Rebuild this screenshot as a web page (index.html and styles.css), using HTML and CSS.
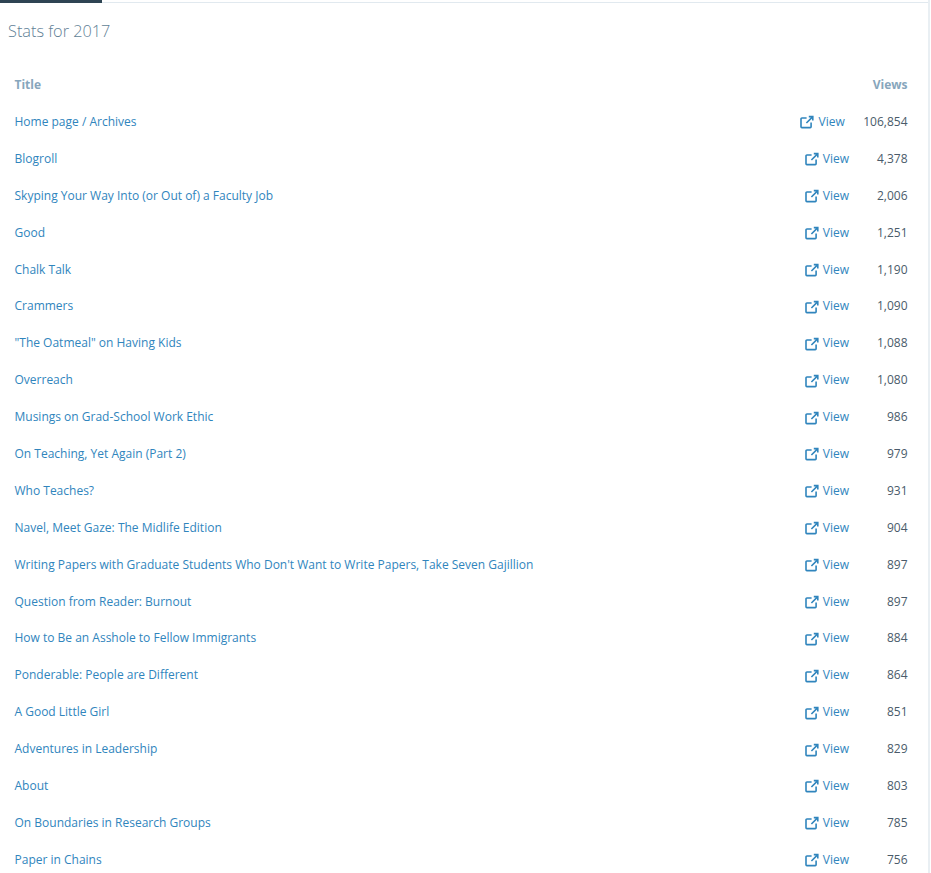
FILE: index.html
```html
<!DOCTYPE html>
<html lang="en">
<head>
<meta charset="utf-8">
<title>Stats for 2017</title>
<link rel="stylesheet" href="styles.css">
</head>
<body>
<svg class="defs" width="0" height="0" aria-hidden="true"><symbol id="ext" viewBox="0 0 14 14"><path d="M6.6 3H1.9a.9.9 0 0 0-.9.9v7.8c0 .5.4.9.9.9h8.3c.5 0 .9-.4.9-.9V7.6M8.8 1.6h4v4M12.8 1.6 6.4 8" fill="none" stroke="currentColor" stroke-width="1.6"/></symbol></svg>
<main class="panel">
<div class="tabbar"><span class="tab-active"></span></div>
<h2 class="heading">Stats for 2017</h2>
<div class="head-row"><span>Title</span><span>Views</span></div>
<ul class="rows">
<li class="row"><a class="title">Home page / Archives</a><a class="view"><svg class="icon"><use href="#ext"/></svg>View</a><span class="count">106,854</span></li>
<li class="row"><a class="title">Blogroll</a><a class="view"><svg class="icon"><use href="#ext"/></svg>View</a><span class="count">4,378</span></li>
<li class="row"><a class="title">Skyping Your Way Into (or Out of) a Faculty Job</a><a class="view"><svg class="icon"><use href="#ext"/></svg>View</a><span class="count">2,006</span></li>
<li class="row"><a class="title">Good</a><a class="view"><svg class="icon"><use href="#ext"/></svg>View</a><span class="count">1,251</span></li>
<li class="row"><a class="title">Chalk Talk</a><a class="view"><svg class="icon"><use href="#ext"/></svg>View</a><span class="count">1,190</span></li>
<li class="row"><a class="title">Crammers</a><a class="view"><svg class="icon"><use href="#ext"/></svg>View</a><span class="count">1,090</span></li>
<li class="row"><a class="title">"The Oatmeal" on Having Kids</a><a class="view"><svg class="icon"><use href="#ext"/></svg>View</a><span class="count">1,088</span></li>
<li class="row"><a class="title">Overreach</a><a class="view"><svg class="icon"><use href="#ext"/></svg>View</a><span class="count">1,080</span></li>
<li class="row"><a class="title">Musings on Grad-School Work Ethic</a><a class="view"><svg class="icon"><use href="#ext"/></svg>View</a><span class="count">986</span></li>
<li class="row"><a class="title">On Teaching, Yet Again (Part 2)</a><a class="view"><svg class="icon"><use href="#ext"/></svg>View</a><span class="count">979</span></li>
<li class="row"><a class="title">Who Teaches?</a><a class="view"><svg class="icon"><use href="#ext"/></svg>View</a><span class="count">931</span></li>
<li class="row"><a class="title">Navel, Meet Gaze: The Midlife Edition</a><a class="view"><svg class="icon"><use href="#ext"/></svg>View</a><span class="count">904</span></li>
<li class="row"><a class="title">Writing Papers with Graduate Students Who Don't Want to Write Papers, Take Seven Gajillion</a><a class="view"><svg class="icon"><use href="#ext"/></svg>View</a><span class="count">897</span></li>
<li class="row"><a class="title">Question from Reader: Burnout</a><a class="view"><svg class="icon"><use href="#ext"/></svg>View</a><span class="count">897</span></li>
<li class="row"><a class="title">How to Be an Asshole to Fellow Immigrants</a><a class="view"><svg class="icon"><use href="#ext"/></svg>View</a><span class="count">884</span></li>
<li class="row"><a class="title">Ponderable: People are Different</a><a class="view"><svg class="icon"><use href="#ext"/></svg>View</a><span class="count">864</span></li>
<li class="row"><a class="title">A Good Little Girl</a><a class="view"><svg class="icon"><use href="#ext"/></svg>View</a><span class="count">851</span></li>
<li class="row"><a class="title">Adventures in Leadership</a><a class="view"><svg class="icon"><use href="#ext"/></svg>View</a><span class="count">829</span></li>
<li class="row"><a class="title">About</a><a class="view"><svg class="icon"><use href="#ext"/></svg>View</a><span class="count">803</span></li>
<li class="row"><a class="title">On Boundaries in Research Groups</a><a class="view"><svg class="icon"><use href="#ext"/></svg>View</a><span class="count">785</span></li>
<li class="row"><a class="title">Paper in Chains</a><a class="view"><svg class="icon"><use href="#ext"/></svg>View</a><span class="count">756</span></li>
</ul>
</main>
</body>
</html>
```
FILE: styles.css
```css
html, body { margin: 0; padding: 0; background: #fff; overflow: hidden; height: 873px; }
body { font-family: "Open Sans", "Noto Sans", sans-serif; font-size: 12px; color: #4a5b6a; }
.defs { display: block; }
.panel { width: 928px; height: 873px; border-right: 2px solid #e9eff3; overflow: hidden; }
.tabbar { height: 2px; border-bottom: 1px solid #e1e9ef; }
.tab-active { display: block; width: 102px; height: 3px; background: #2e4453; }
.heading { margin: 0; padding: 17px 0 0 8px; font-size: 16.3px; line-height: 23px; font-weight: 300; color: #5f7f96; }
.head-row { display: flex; justify-content: space-between; padding: 33px 20.5px 0 14.5px; line-height: 18px; font-weight: 700; color: #87a6bc; }
.rows { list-style: none; margin: 0; padding: 9px 0 0; }
.row { display: flex; align-items: center; height: 36.9px; padding: 0 20.5px 0 14.5px; box-sizing: border-box; }
.title { flex: 1; color: #3085bd; }
.view { display: flex; align-items: center; color: #3085bd; }
.icon { width: 14px; height: 14px; margin: 2px 4px 0 0; }
.count { min-width: 40px; margin-left: 18.5px; text-align: right; color: #4a5b6a; }
```
